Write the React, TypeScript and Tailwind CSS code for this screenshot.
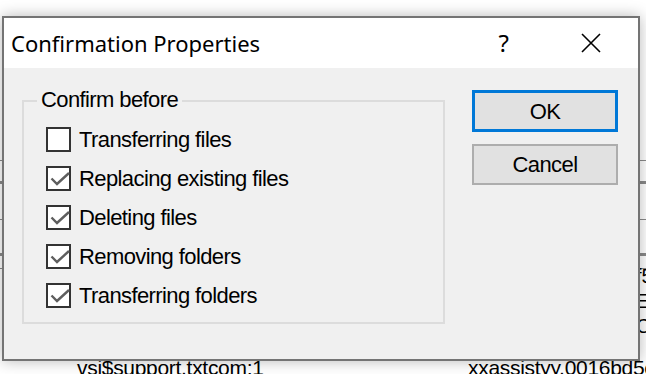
import React from "react";

const pix = { fontFamily: '"Liberation Sans", Arial, sans-serif' };

function Check() {
  return (
    <svg width="24" height="24" viewBox="0 0 24 24" className="absolute left-0 top-0">
      <path d="M3.5 10.5 L9 16 L21 5" fill="none" stroke="#5e5e5e" strokeWidth="2.4" />
    </svg>
  );
}

function Row({ label, checked }: { label: string; checked: boolean }) {
  return (
    <div className="flex h-[39px] items-start">
      <div className="relative w-[25px] h-[25px] border-2 border-[#333333] bg-white shrink-0">
        {checked && <Check />}
      </div>
      <span className="ml-[8px] text-[22px] leading-[25px] tracking-[-0.6px] text-black whitespace-nowrap" style={pix}>
        {label}
      </span>
    </div>
  );
}

export default function App() {
  const rows: [string, boolean][] = [
    ["Transferring files", false],
    ["Replacing existing files", true],
    ["Deleting files", true],
    ["Removing folders", true],
    ["Transferring folders", true],
  ];
  return (
    <div className="relative w-[646px] h-[374px] bg-white overflow-hidden">
      {/* background application */}
      <div className="absolute inset-0">
        <div className="absolute left-0 right-0 top-[160px] h-px bg-[#8a8a8a]" />
        <div className="absolute left-0 right-0 top-[181px] h-[3px] bg-[#8a8a8a]" />
        <div className="absolute left-0 right-0 top-[219px] h-px bg-[#8a8a8a]" />
        <div className="absolute left-0 right-0 top-[253px] h-[3px] bg-[#8a8a8a]" />
        <div className="absolute left-0 right-0 top-[268px] h-px bg-[#8a8a8a]" />
        <div className="absolute left-[636px] top-[264px] text-[20px] leading-[25px] text-black" style={pix}>
          <div>f5</div>
          <div>E</div>
          <div>C</div>
        </div>
        <div className="absolute left-[77px] top-[358px] text-[21px] leading-[20px] tracking-[-0.3px] text-black whitespace-nowrap" style={pix}>
          vsi$support.txtcom;1
        </div>
        <div className="absolute left-[468px] top-[358px] text-[21px] leading-[20px] tracking-[-0.3px] text-black whitespace-nowrap" style={pix}>
          xxassistyy.0016bd5c
        </div>
      </div>

      {/* dialog window */}
      <div className="absolute left-[2px] top-[16px] w-[638px] h-[345px] border-2 border-[#747474] bg-[#f0f0f0] shadow-[0_0_14px_rgba(0,0,0,0.28)] flex flex-col">
        <div className="h-[50px] bg-white flex items-center shrink-0">
          <span className="ml-[7px] text-[22px] text-black" style={{ fontFamily: '"Noto Sans", "Open Sans", sans-serif' }}>
            Confirmation Properties
          </span>
          <span className="ml-auto mr-[72px] text-[24px] text-black" style={{ fontFamily: '"Noto Sans", sans-serif' }}>
            ?
          </span>
          <svg width="20" height="20" viewBox="0 0 20 20" className="mr-[37px]">
            <path d="M1 1 L19 19 M19 1 L1 19" stroke="#000" strokeWidth="1.6" fill="none" />
          </svg>
        </div>
        <div className="flex flex-1">
          <div className="relative ml-[18px] mt-[32px] w-[423px] h-[224px] border-2 border-[#dcdcdc] pl-[22px] pt-[25px]">
            <span
              className="absolute left-[13px] top-[-15px] px-[4px] bg-[#f0f0f0] text-[22px] leading-[25px] tracking-[-0.6px] text-black whitespace-nowrap"
              style={pix}
            >
              Confirm before
            </span>
            <div className="flex flex-col">
              {rows.map(([l, c]) => (
                <Row key={l} label={l} checked={c} />
              ))}
            </div>
          </div>
          <div className="ml-[27px] mt-[22px] flex flex-col gap-[12px]">
            <button
              className="w-[146px] h-[42px] border-[3px] border-[#0078d7] bg-[#e1e1e1] text-[22px] tracking-[-0.6px] text-black flex items-center justify-center"
              style={pix}
            >
              OK
            </button>
            <button
              className="w-[146px] h-[41px] border-2 border-[#adadad] bg-[#e1e1e1] text-[22px] tracking-[-0.6px] text-black flex items-center justify-center"
              style={pix}
            >
              Cancel
            </button>
          </div>
        </div>
      </div>
    </div>
  );
}
